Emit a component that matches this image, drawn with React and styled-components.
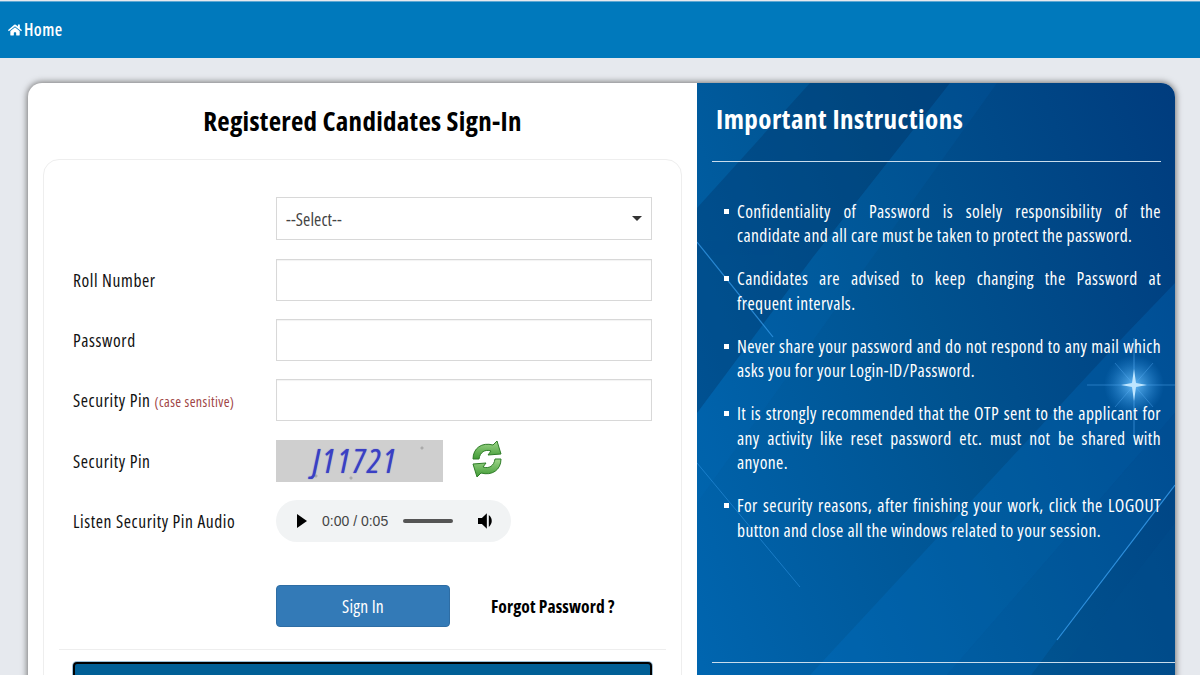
import React from "react";
import styled, { createGlobalStyle } from "styled-components";
import { FaHome } from "react-icons/fa";

const GlobalStyle = createGlobalStyle`
  html, body {
    margin: 0;
    height: 675px;
    overflow: hidden;
    background: #e6e9ee;
    font-family: "Open Sans", "Noto Sans", sans-serif;
    font-stretch: 75%;
  }
  * { box-sizing: border-box; }
`;

const Nav = styled.nav`
  height: 57px;
  margin-top: 1px;
  border-top: 1px solid #5fa8d3;
  background: #0079bc;
  display: flex;
  align-items: center;
  padding: 0 8px;
`;

const HomeLink = styled.a`
  display: flex;
  align-items: center;
  gap: 2px;
  color: #fff;
  font-size: 17px;
  font-weight: 600;
  letter-spacing: 0.45px;
  margin-top: -1px;
`;

const Page = styled.main`
  padding: 25px 25px 0 28px;
`;

const Card = styled.section`
  display: grid;
  grid-template-columns: 669px 478px;
  height: 720px;
  border-radius: 14px 14px 0 0;
  background: #fff;
  box-shadow: 0 0 6px 1px #777;
`;

const LeftPane = styled.div`
  padding: 0 15px;
`;

const Title = styled.h1`
  margin: 0;
  height: 76px;
  padding-bottom: 2px;
  display: flex;
  align-items: center;
  justify-content: center;
  font-size: 27px;
  font-weight: 700;
  letter-spacing: 0.28px;
  color: #000;
`;

const FormCard = styled.form`
  border: 1px solid #eee;
  border-radius: 16px;
  padding: 37px 29px 0;
`;

const Row = styled.div`
  display: grid;
  grid-template-columns: 203px 376px;
  align-items: center;
  height: 42px;
  margin-bottom: ${(p) => (p.$first ? 19.5 : 18.35)}px;
`;

const Label = styled.label`
  font-size: 17.5px;
  font-weight: 500;
  letter-spacing: 0.6px;
  color: #111;
`;

const Hint = styled.span`
  font-size: 14px;
  font-weight: 500;
  letter-spacing: 0.4px;
  color: #a04545;
`;

const SelectBox = styled.div`
  height: 43px;
  border: 1px solid #d8d8d8;
  display: flex;
  align-items: center;
  justify-content: space-between;
  padding: 0 9px 0 9px;
  font-size: 17.5px;
  letter-spacing: 0.1px;
  color: #444;
`;

const Caret = styled.span`
  width: 0;
  height: 0;
  border-left: 5px solid transparent;
  border-right: 5px solid transparent;
  border-top: 5px solid #333;
`;

const Input = styled.input`
  height: 42px;
  width: 100%;
  border: 1px solid #d8d8d8;
  background: #fff;
  box-shadow: inset 0 1px 1px rgba(0, 0, 0, 0.05);
`;

const CaptchaWrap = styled.div`
  display: flex;
  align-items: flex-start;
  gap: 28px;
`;

const Captcha = styled.div`
  width: 167px;
  height: 42px;
  background:
    radial-gradient(circle at 146px 8px, #aaa 0 1px, transparent 2px),
    radial-gradient(circle at 40px 36px, #aaa 0 1px, transparent 2px),
    radial-gradient(circle at 75px 38px, #aaa 0 1px, transparent 2px),
    #cfcfcf;
  color: #3a3fc4;
  font-style: italic;
  font-size: 33px;
  text-shadow: 0 0 1px #3a3fc4;
  display: flex;
  align-items: center;
  justify-content: center;
  letter-spacing: 2.5px;
  padding-right: 8px;
`;

const Player = styled.div`
  width: 235px;
  height: 42px;
  border-radius: 21px;
  background: #f1f3f4;
  display: flex;
  align-items: center;
  padding: 0 17px 0 21px;
  font-family: "Liberation Sans", sans-serif;
  font-size: 14px;
  white-space: nowrap;
  color: #444;
`;

const PlayIcon = styled.span`
  width: 0;
  height: 0;
  border-top: 7px solid transparent;
  border-bottom: 7px solid transparent;
  border-left: 10px solid #000;
  margin-right: 15px;
`;

const Track = styled.span`
  width: 51px;
  height: 4px;
  border-radius: 2px;
  background: #555;
  margin: 0 25px 0 15px;
`;

const Actions = styled.div`
  display: grid;
  grid-template-columns: 203px 174px auto;
  align-items: center;
  margin-top: 43px;
  padding-bottom: 22px;
`;

const SignIn = styled.button`
  grid-column: 2;
  height: 42px;
  border: 1px solid #2e6da4;
  border-radius: 4px;
  background: #337ab7;
  color: #fff;
  font: inherit;
  font-size: 17.5px;
  letter-spacing: 0.2px;
`;

const Forgot = styled.a`
  margin-left: 41px;
  font-size: 17.5px;
  font-weight: 700;
  letter-spacing: 0.1px;
  color: #000;
`;

const Divider = styled.div`
  height: 1px;
  margin: 0 -14px;
  background: #eee;
`;

const DarkButton = styled.div`
  height: 60px;
  margin-top: 12px;
  background: #005f96;
  border: 2px solid #000;
  border-radius: 4px;
  box-shadow: 0 0 0 1px #9cc0d8;
`;

const RightPane = styled.aside`
  position: relative;
  overflow: hidden;
  border-radius: 0 14px 0 0;
  padding: 0 0 0 15px;
  color: #fff;
  background: linear-gradient(250deg, #003c7e 0%, #00528f 45%, #0068b4 100%);
`;

const Art = styled.svg`
  position: absolute;
  inset: 0;
  width: 100%;
  height: 100%;
`;

const PaneContent = styled.div`
  position: relative;
`;

const PaneTitle = styled.h2`
  margin: 0;
  height: 73px;
  padding: 0 0 3px 4px;
  display: flex;
  align-items: center;
  font-size: 27px;
  font-weight: 700;
  letter-spacing: 0.5px;
`;

const Rule = styled.hr`
  margin: 5px 14px 0 0;
  border: 0;
  height: 1px;
  background: #c8dcec;
`;

const Rules = styled.ul`
  list-style: none;
  margin: 36.5px 14px 0 0;
  padding: 0 0 0 25px;
  height: 463.5px;
`;

const Item = styled.li`
  position: relative;
  font-size: 17.5px;
  letter-spacing: 0.4px;
  line-height: 24.6px;
  text-align: justify;
  margin-bottom: 18.4px;

  &::before {
    content: "";
    position: absolute;
    left: -13px;
    top: 10px;
    width: 5px;
    height: 5px;
    background: #fff;
  }
`;

const BottomRule = styled(Rule)`
  margin: 0;
`;

const instructions = [
  "Confidentiality of Password is solely responsibility of the candidate and all care must be taken to protect the password.",
  "Candidates are advised to keep changing the Password at frequent intervals.",
  "Never share your password and do not respond to any mail which asks you for your Login-ID/Password.",
  "It is strongly recommended that the OTP sent to the applicant for any activity like reset password etc. must not be shared with anyone.",
  "For security reasons, after finishing your work, click the LOGOUT button and close all the windows related to your session.",
];

const PaneArt = () => (
  <Art viewBox="0 0 478 720" preserveAspectRatio="none">
    <defs>
      <radialGradient id="glow">
        <stop offset="0%" stopColor="#6fc4ff" stopOpacity="0.9" />
        <stop offset="100%" stopColor="#2a8fe0" stopOpacity="0" />
      </radialGradient>
    </defs>
    <polygon points="0,125 113,0 253,0 116,174 0,330" fill="#002f60" opacity="0.3" />
    <polygon points="0,330 116,174 253,0 300,0 0,420" fill="#0078d0" opacity="0.1" />
    <polygon points="113,592 430,250 478,200 478,330 250,592" fill="#0078d0" opacity="0.25" />
    <polygon points="60,720 113,592 250,592 478,330 478,402 360,557 240,720" fill="#0074c8" opacity="0.22" />
    <polygon points="360,592 478,440 478,720 300,720" fill="#00508f" opacity="0.3" />
    <line x1="0" y1="159" x2="76" y2="254" stroke="#3aa0f0" strokeWidth="1.2" opacity="0.7" />
    <line x1="0" y1="380" x2="103" y2="504" stroke="#3aa0f0" strokeWidth="1" opacity="0.45" />
    <line x1="478" y1="402" x2="360" y2="557" stroke="#3aa0f0" strokeWidth="1.2" opacity="0.8" />
    <circle cx="437" cy="302" r="30" fill="url(#glow)" />
    <line x1="437" y1="255" x2="437" y2="355" stroke="#5fb6ff" strokeWidth="1" opacity="0.5" />
    <line x1="390" y1="302" x2="478" y2="302" stroke="#5fb6ff" strokeWidth="1" opacity="0.4" />
    <line x1="418" y1="280" x2="456" y2="324" stroke="#5fb6ff" strokeWidth="1" opacity="0.35" />
    <line x1="456" y1="280" x2="418" y2="324" stroke="#5fb6ff" strokeWidth="1" opacity="0.35" />
    <polygon points="437,286 439,300 450,302 439,304 437,318 435,304 424,302 435,300" fill="#bfe6ff" />
  </Art>
);

const RefreshIcon = () => (
  <svg width="32" height="38" viewBox="0 0 32 38">
    <defs>
      <linearGradient id="leaf" x1="0" y1="0" x2="0" y2="1">
        <stop offset="0%" stopColor="#9fd68a" />
        <stop offset="100%" stopColor="#3f9a34" />
      </linearGradient>
    </defs>
    <path d="M2 19 C2 8 11 2 22 5 L26 1 L30 14 L17 15 L20 11 C14 9 9 12 8 19 Z" fill="url(#leaf)" stroke="#2f7d28" strokeWidth="1" />
    <path d="M30 19 C30 30 21 36 10 33 L6 37 L2 24 L15 23 L12 27 C18 29 23 26 24 19 Z" fill="url(#leaf)" stroke="#2f7d28" strokeWidth="1" />
  </svg>
);

const SpeakerIcon = () => (
  <svg width="16" height="18" viewBox="0 0 16 18">
    <path d="M0 6 H4 L9 1 V17 L4 12 H0 Z" fill="#000" />
    <path d="M11 3 C15 6 15 12 11 15 Z" fill="#000" />
  </svg>
);

export default function App() {
  return (
    <>
      <GlobalStyle />
      <Nav>
        <HomeLink>
          <FaHome size={14} />
          Home
        </HomeLink>
      </Nav>
      <Page>
        <Card>
          <LeftPane>
            <Title>Registered Candidates Sign-In</Title>
            <FormCard>
              <Row $first>
                <span />
                <SelectBox>
                  --Select--
                  <Caret />
                </SelectBox>
              </Row>
              <Row>
                <Label>Roll Number</Label>
                <Input />
              </Row>
              <Row>
                <Label>Password</Label>
                <Input />
              </Row>
              <Row>
                <Label>
                  Security Pin <Hint>(case sensitive)</Hint>
                </Label>
                <Input />
              </Row>
              <Row>
                <Label>Security Pin</Label>
                <CaptchaWrap>
                  <Captcha>J11721</Captcha>
                  <RefreshIcon />
                </CaptchaWrap>
              </Row>
              <Row>
                <Label>Listen Security Pin Audio</Label>
                <Player>
                  <PlayIcon />
                  0:00 / 0:05
                  <Track />
                  <SpeakerIcon />
                </Player>
              </Row>
              <Actions>
                <SignIn type="button">Sign In</SignIn>
                <Forgot>Forgot Password ?</Forgot>
              </Actions>
              <Divider />
              <DarkButton />
            </FormCard>
          </LeftPane>
          <RightPane>
            <PaneArt />
            <PaneContent>
              <PaneTitle>Important Instructions</PaneTitle>
              <Rule />
              <Rules>
                {instructions.map((text) => (
                  <Item key={text}>{text}</Item>
                ))}
              </Rules>
              <BottomRule />
            </PaneContent>
          </RightPane>
        </Card>
      </Page>
    </>
  );
}
